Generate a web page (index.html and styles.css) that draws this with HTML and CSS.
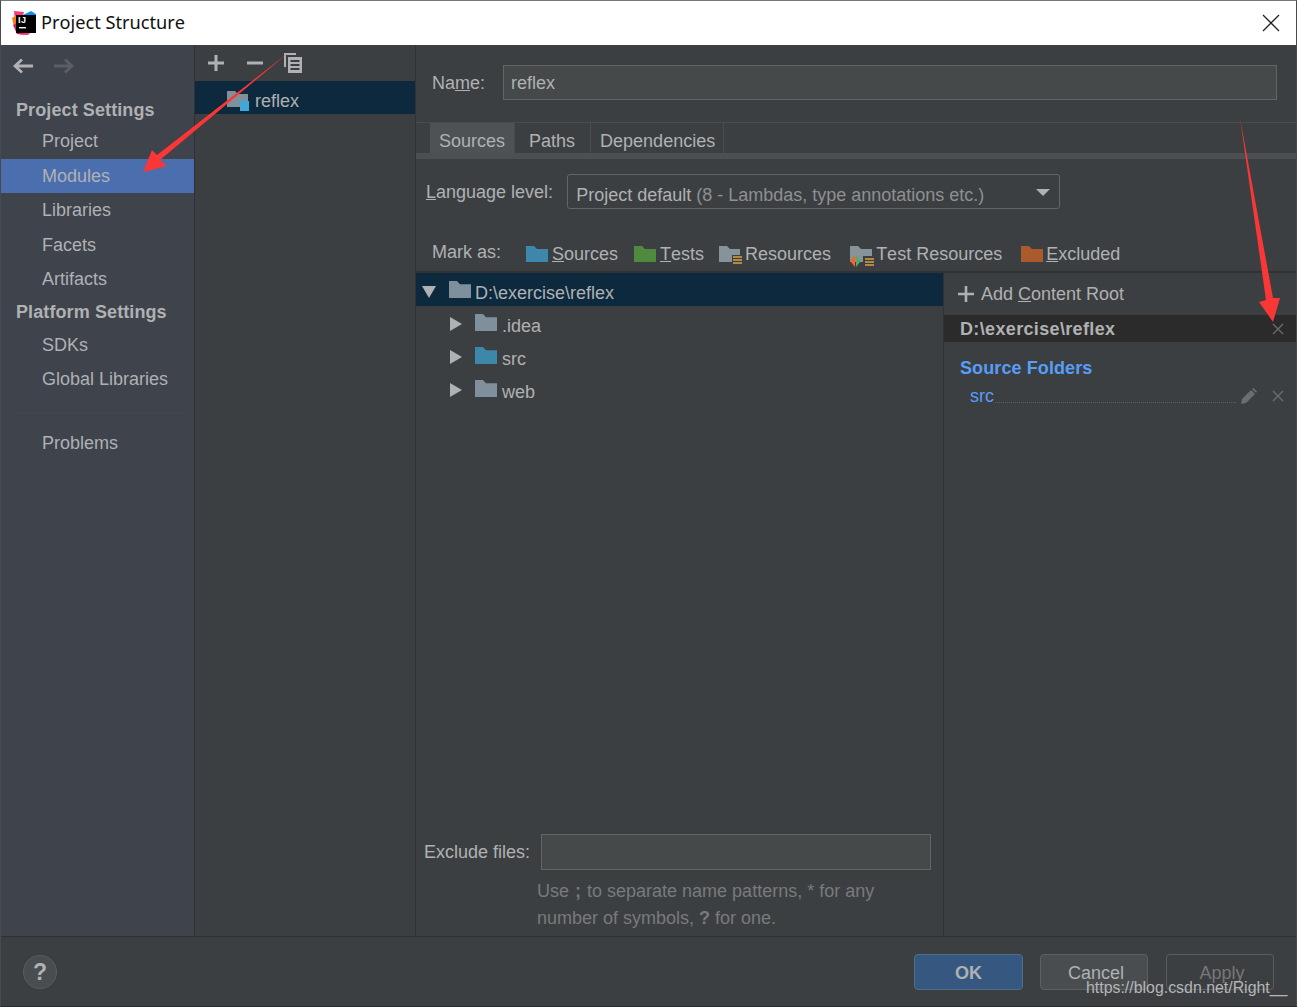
FILE: index.html
```html
<!DOCTYPE html>
<html>
<head>
  <title>Project Structure</title>
  <link rel="stylesheet" href="styles.css">
</head>
<body>
  <div class="window">
    <div class="title-bar">
      <svg class="app-icon" width="24" height="24" viewBox="0 0 24 24">
        <path d="M2 0 L12 1 L8 14 L3 10 Z" fill="#fc3a77"/>
        <path d="M11 4 L19 0 L24 3 V16 H14 Z" fill="#0f8fee"/>
        <path d="M0 7 L5 4 V14 L2 15 Z" fill="#f97a12"/>
        <path d="M1 14 L5 12 L12 24 L5 23 Z" fill="#e8175d"/>
        <path d="M10 20 L20 20 L16 24 L11 24 Z" fill="#fc3a77"/>
        <path d="M4 4 H24 V22 H4 Z" fill="#000"/>
        <path d="M7 16 H14 V17.4 H7 Z" fill="#fff"/>
      </svg>
      <span class="title-mark">IJ</span>
      <span class="title-text">Project Structure</span>
      <svg class="close-icon" width="18" height="18" viewBox="0 0 18 18"><path d="M1 1 L17 17 M17 1 L1 17" stroke="#222" stroke-width="1.3" fill="none"/></svg>
    </div>

    <div class="main">
      <div class="sidebar">
        <div class="nav-arrows">
          <svg width="24" height="18" viewBox="0 0 24 18"><path d="M21 9 H3 M10 2.5 L3 9 L10 15.5" stroke="#afb1b3" stroke-width="2.8" fill="none"/></svg>
          <svg width="24" height="18" viewBox="0 0 24 18"><path d="M2 9 H20 M13 2.5 L20 9 L13 15.5" stroke="#5c5f61" stroke-width="2.8" fill="none"/></svg>
        </div>
        <div class="side-heading first">Project Settings</div>
        <div class="side-item">Project</div>
        <div class="side-item selected">Modules</div>
        <div class="side-item">Libraries</div>
        <div class="side-item">Facets</div>
        <div class="side-item">Artifacts</div>
        <div class="side-heading">Platform Settings</div>
        <div class="side-item">SDKs</div>
        <div class="side-item">Global Libraries</div>
        <div class="side-sep"></div>
        <div class="side-item">Problems</div>
      </div>

      <div class="modules">
        <div class="modules-toolbar">
          <svg width="16" height="16" viewBox="0 0 16 16"><path d="M8 0 V16 M0 8 H16" stroke="#afb1b3" stroke-width="3"/></svg>
          <svg width="16" height="16" viewBox="0 0 16 16"><path d="M0 8 H16" stroke="#afb1b3" stroke-width="3"/></svg>
          <svg width="20" height="22" viewBox="0 0 20 22">
            <path d="M1 1 H13 V3 H3 V15 H1 Z" fill="#afb1b3"/>
            <path d="M5 5 H19 V21 H5 Z M7.5 8 V10 H16.5 V8 Z M7.5 12 V14 H16.5 V12 Z M7.5 16 V18 H16.5 V16 Z" fill="#afb1b3" fill-rule="evenodd"/>
          </svg>
        </div>
        <div class="module-row">
          <svg width="24" height="22" viewBox="0 0 24 22">
            <path d="M1 1 H9 L12 4 H22 V17 H1 Z" fill="#7f8f9c"/>
            <rect x="14" y="11" width="9" height="10" fill="#3ea8d8"/>
          </svg>
          <span>reflex</span>
        </div>
      </div>

      <div class="content">
        <div class="name-row">
          <span class="label">Na<u>m</u>e:</span>
          <div class="name-input">reflex</div>
        </div>

        <div class="tabs">
          <div class="tab active">Sources</div>
          <div class="tab">Paths</div>
          <div class="tab">Dependencies</div>
        </div>

        <div class="lang-row">
          <span class="label"><u>L</u>anguage level:</span>
          <div class="lang-select">
            <span>Project default <span class="dim">(8 - Lambdas, type annotations etc.)</span></span>
            <span class="caret"></span>
          </div>
        </div>

        <div class="mark-row">
          <span class="label mark-label">Mark as:</span>
          <div class="mark-item">
            <svg width="22" height="16" viewBox="0 0 22 16"><path class="folder-blue" d="M0 0 H8 L11 3 H22 V16 H0 Z"/></svg>
            <span><u>S</u>ources</span>
          </div>
          <div class="mark-item">
            <svg width="22" height="16" viewBox="0 0 22 16"><path d="M0 0 H8 L11 3 H22 V16 H0 Z" fill="#4f8a3e"/></svg>
            <span><u>T</u>ests</span>
          </div>
          <div class="mark-item">
            <svg width="23" height="20" viewBox="0 0 23 20">
              <path d="M0 0 H8 L11 3 H21 V16 H0 Z" fill="#87939a"/>
              <rect x="13" y="9" width="10" height="11" fill="#3c3f41"/>
              <path d="M14 11 H23 M14 14 H23 M14 17 H23" stroke="#d9a343" stroke-width="1.6"/>
            </svg>
            <span>Resources</span>
          </div>
          <div class="mark-item">
            <svg width="24" height="22" viewBox="0 0 24 22">
              <path d="M0 0 H8 L11 3 H22 V16 H0 Z" fill="#87939a"/>
              <path d="M0 15 L5 9 V21 Z" fill="#f26522"/>
              <path d="M11 15 L6 9 V21 Z" fill="#59a869"/>
              <rect x="13" y="10" width="11" height="12" fill="#3c3f41"/>
              <path d="M15 13 H24 M15 16 H24 M15 19 H24" stroke="#d9a343" stroke-width="1.6"/>
            </svg>
            <span>Test Resources</span>
          </div>
          <div class="mark-item">
            <svg width="22" height="16" viewBox="0 0 22 16"><path d="M0 0 H8 L11 3 H22 V16 H0 Z" fill="#aa5a2c"/></svg>
            <span><u>E</u>xcluded</span>
          </div>
        </div>

        <div class="split">
          <div class="tree-pane">
            <div class="tree">
              <div class="tree-row root">
                <span class="arrow-down"></span>
                <svg width="22" height="17" viewBox="0 0 22 16" preserveAspectRatio="none"><path class="folder-grey" d="M0 0 H8 L11 3 H22 V16 H0 Z"/></svg>
                <span>D:\exercise\reflex</span>
              </div>
              <div class="tree-row child">
                <span class="arrow-right"></span>
                <svg width="22" height="17" viewBox="0 0 22 16" preserveAspectRatio="none"><path class="folder-grey" d="M0 0 H8 L11 3 H22 V16 H0 Z"/></svg>
                <span>.idea</span>
              </div>
              <div class="tree-row child">
                <span class="arrow-right"></span>
                <svg width="22" height="17" viewBox="0 0 22 16" preserveAspectRatio="none"><path class="folder-blue" d="M0 0 H8 L11 3 H22 V16 H0 Z"/></svg>
                <span>src</span>
              </div>
              <div class="tree-row child">
                <span class="arrow-right"></span>
                <svg width="22" height="17" viewBox="0 0 22 16" preserveAspectRatio="none"><path class="folder-grey" d="M0 0 H8 L11 3 H22 V16 H0 Z"/></svg>
                <span>web</span>
              </div>
            </div>
            <div class="exclude">
              <div class="exclude-row">
                <span class="label">Exclude files:</span>
                <div class="exclude-input"></div>
              </div>
              <div class="exclude-hint">Use <b class="semi">;</b> to separate name patterns, * for any<br>number of symbols, <b>?</b> for one.</div>
            </div>
          </div>

          <div class="roots-pane">
            <div class="add-root">
              <svg width="16" height="16" viewBox="0 0 16 16"><path d="M8 0 V16 M0 8 H16" stroke="#afb1b3" stroke-width="2.6"/></svg>
              <span>Add <u>C</u>ontent Root</span>
            </div>
            <div class="root-head">
              <span>D:\exercise\reflex</span>
              <svg class="x-icon" width="12" height="12" viewBox="0 0 12 12"><path d="M1 1 L11 11 M11 1 L1 11" stroke="#6b6e70" stroke-width="1.3"/></svg>
            </div>
            <div class="source-title">Source Folders</div>
            <div class="source-row">
              <span class="source-name">src</span>
              <span class="leader"></span>
              <svg class="pencil" width="16" height="16" viewBox="0 0 16 16"><path d="M0 16 L1 11 L10 2 L14 6 L5 15 Z M11 1 L12.5 0 L16 3.5 L15 5 Z" fill="#6b6e70"/></svg>
              <svg class="x-icon" width="12" height="12" viewBox="0 0 12 12"><path d="M1 1 L11 11 M11 1 L1 11" stroke="#6b6e70" stroke-width="1.3"/></svg>
            </div>
          </div>
        </div>
      </div>
    </div>

    <div class="footer">
      <div class="help">?</div>
      <div class="buttons">
        <div class="btn primary">OK</div>
        <div class="btn">Cancel</div>
        <div class="btn disabled">Apply</div>
      </div>
    </div>
  </div>

  <div class="watermark">https://blog.csdn.net/Right__</div>

  <!-- red annotation arrows drawn over the screenshot -->
  <svg class="annotations" width="1297" height="1007" viewBox="0 0 1297 1007">
    <path d="M288 53 L160 160 L167 166 L143 172 L152 150 L157 155 Z" fill="#fb3636"/>
    <path d="M1240 118 L1273 298 L1280 298 L1273 322 L1259 302 L1266 300 Z" fill="#fb3636"/>
  </svg>
</body>
</html>
```

FILE: styles.css
```css
* {
  box-sizing: border-box;
}

html, body {
  margin: 0;
  height: 100%;
}

body {
  width: 1297px;
  height: 1007px;
  overflow: hidden;
  position: relative;
  font-family: "Liberation Sans", Arial, sans-serif;
  font-size: 18px;
  font-kerning: none;
  color: #afb1b3;
  background: #3c3f41;
}

.window {
  width: 100%;
  height: 100%;
  display: flex;
  flex-direction: column;
  border: 1px solid #4a4a4a;
  border-top-color: #777;
  border-bottom-color: #2b2b2b;
}

.title-bar {
  height: 44px;
  flex: none;
  background: #fff;
  color: #111;
  display: flex;
  align-items: center;
  padding-left: 11px;
  position: relative;
}

.title-mark {
  position: absolute;
  left: 17px;
  top: 14px;
  font-size: 9px;
  font-weight: bold;
  color: #fff;
  letter-spacing: 0.5px;
  line-height: 10px;
}

.title-text {
  font-family: "Noto Sans", sans-serif;
  font-size: 18.2px;
  line-height: 20px;
  margin: -2px 0 0 5px;
}

.close-icon {
  margin-left: auto;
  margin-right: 16px;
  margin-top: -1px;
}

.main {
  flex: 1;
  min-height: 0;
  display: flex;
}

.sidebar {
  width: 194px;
  flex: none;
  background: #3e434c;
  border-right: 1px solid #2f3133;
}

.nav-arrows {
  height: 42px;
  padding: 12px 0 0 11px;
  display: flex;
  gap: 16px;
}

.side-heading {
  font-weight: bold;
  letter-spacing: 0.1px;
  height: 31px;
  line-height: 31px;
  padding-left: 15px;
}

.side-heading.first {
  margin-top: 8px;
  height: 29px;
}

.side-item {
  height: 34.5px;
  line-height: 34px;
  padding-left: 41px;
}

.side-item.selected {
  background: #4b6eaf;
}

.side-sep {
  height: 1px;
  margin: 15px 10px 13px 14px;
  background: #45484f;
}

.modules {
  width: 221px;
  flex: none;
  border-right: 1px solid #323232;
}

.modules-toolbar {
  height: 36px;
  display: flex;
  align-items: center;
  padding-left: 13px;
  gap: 23px;
}

.modules-toolbar svg:last-child {
  margin-left: -3px;
}

.module-row {
  height: 33px;
  background: #0d293e;
  display: flex;
  align-items: center;
  padding: 7px 0 0 31px;
  gap: 5px;
}

.content {
  flex: 1;
  min-width: 0;
  display: flex;
  flex-direction: column;
}

.name-row {
  height: 78px;
  flex: none;
  display: flex;
  align-items: center;
  padding: 0 19px 0 16px;
  border-bottom: 1px solid #494b4d;
}

.name-input {
  flex: 1;
  height: 35px;
  align-self: flex-start;
  margin: 20px 0 0 18px;
  padding-left: 7px;
  line-height: 35px;
  background: #45494a;
  border: 1px solid #646464;
}

.tabs {
  height: 36px;
  flex: none;
  display: flex;
  padding-left: 14px;
  border-bottom: 6px solid #4c5052;
}

.tab {
  height: 30px;
  line-height: 36px;
  padding: 0 9px;
  border-right: 1px solid #4a4c4e;
}

.tab.active {
  background: #4e5254;
}

.tab:nth-child(2) {
  padding: 0 15px 0 14px;
}

.tab:last-child {
  padding-right: 8px;
}

.lang-row {
  height: 69px;
  flex: none;
  display: flex;
  align-items: flex-start;
  padding: 15px 0 0 10px;
}

.lang-row .label {
  margin-top: 8px;
}

.lang-select {
  width: 493px;
  height: 35px;
  margin-left: 14px;
  border: 1px solid #646464;
  border-radius: 3px;
  padding-left: 8px;
  line-height: 40px;
  display: flex;
  justify-content: space-between;
}

.dim {
  color: #8e9092;
}

.caret {
  width: 0;
  height: 0;
  margin: 14px 9px 0 0;
  border-left: 7px solid transparent;
  border-right: 7px solid transparent;
  border-top: 7px solid #afb1b3;
}

.mark-row {
  height: 45px;
  flex: none;
  display: flex;
  align-items: flex-start;
  padding: 14px 0 0 16px;
  border-bottom: 2px solid #323232;
}

.mark-label {
  margin-right: 25px;
  line-height: 20px;
}

.mark-item {
  display: flex;
  align-items: flex-start;
  margin-right: 16px;
  line-height: 24px;
  gap: 4px;
}

.mark-item svg {
  margin-top: 4px;
}

.mark-item:nth-child(3) {
  margin-right: 15px;
}

.mark-item:nth-child(4) {
  gap: 3px;
  margin-right: 19px;
}

.mark-item:nth-child(5) {
  gap: 2px;
  margin-right: 19px;
}

.mark-item:nth-child(6) {
  gap: 3px;
}

.folder-blue {
  fill: #3d87aa;
}

.folder-grey {
  fill: #7f8f9c;
}

.split {
  flex: 1;
  min-height: 0;
  display: flex;
}

.tree-pane {
  width: 527px;
  flex: none;
  display: flex;
  flex-direction: column;
}

.tree {
  flex: 1;
}

.tree-row {
  height: 33px;
  display: flex;
  align-items: center;
  padding-top: 8px;
  gap: 5px;
}

.tree-row svg {
  margin-top: -8px;
}

.tree-row.root {
  background: #0d293e;
  padding-left: 6px;
  gap: 4px;
}

.tree-row.child {
  padding-left: 34px;
}

.arrow-down {
  width: 0;
  height: 0;
  margin-right: 9px;
  margin-top: -3px;
  border-left: 7px solid transparent;
  border-right: 7px solid transparent;
  border-top: 12px solid #afb1b3;
}

.arrow-right {
  width: 0;
  height: 0;
  margin-right: 8px;
  margin-top: -5px;
  border-top: 7px solid transparent;
  border-bottom: 7px solid transparent;
  border-left: 12px solid #afb1b3;
}

.exclude {
  height: 102px;
  flex: none;
  padding-left: 8px;
}

.exclude-row {
  display: flex;
  align-items: center;
}

.exclude-input {
  width: 390px;
  height: 36px;
  margin-left: 11px;
  background: #45494a;
  border: 1px solid #646464;
}

.exclude-hint {
  margin: 8px 0 0 113px;
  line-height: 27px;
  color: #787a7c;
}

.semi {
  margin: 0 1px;
}

.roots-pane {
  flex: 1;
  border-left: 1px solid #323232;
}

.add-root {
  height: 42px;
  display: flex;
  align-items: center;
  gap: 7px;
  padding-left: 14px;
}

.root-head {
  height: 27px;
  padding: 1px 12px 0 16px;
  background: #2b2b2b;
  display: flex;
  align-items: center;
  justify-content: space-between;
  font-weight: bold;
}

.root-head span {
  letter-spacing: 0.35px;
}

.source-title {
  margin-top: 13px;
  padding-left: 16px;
  height: 27px;
  line-height: 26px;
  letter-spacing: 0.1px;
  color: #589df6;
  font-weight: bold;
}

.source-row {
  height: 28px;
  display: flex;
  align-items: center;
  padding: 0 12px 0 26px;
}

.source-name {
  color: #589df6;
}

.leader {
  flex: 1;
  margin: 13px 5px 0 1px;
  border-bottom: 1px dotted #5e6163;
}

.pencil {
  margin-right: 15px;
}

.footer {
  height: 70px;
  flex: none;
  border-top: 1px solid #2f3133;
  display: flex;
  align-items: flex-start;
  justify-content: space-between;
  padding: 18px 22px 0 22px;
}

.help {
  width: 34px;
  height: 34px;
  border-radius: 50%;
  background: #4a4d4f;
  border: 1px solid #5a5d5f;
  text-align: center;
  line-height: 33px;
  font-size: 23px;
  font-weight: bold;
}

.buttons {
  display: flex;
  gap: 18px;
  margin-top: -1px;
}

.btn {
  width: 108px;
  height: 36px;
  padding-left: 4px;
  border: 1px solid #5e6060;
  border-radius: 4px;
  background: #4a4d4f;
  text-align: center;
  line-height: 36px;
}

.btn.primary {
  width: 109px;
  margin-right: -1px;
  padding-left: 0;
  background: #365880;
  border-color: #4c708c;
  font-weight: bold;
}

.btn.disabled {
  background: none;
  border-color: #5a5d5f;
  color: #777;
}

.watermark {
  position: absolute;
  left: 1086px;
  top: 978px;
  font-size: 15.9px;
  line-height: 20px;
  color: #b4b6b8;
}

.annotations {
  position: absolute;
  left: 0;
  top: 0;
  pointer-events: none;
}
```
